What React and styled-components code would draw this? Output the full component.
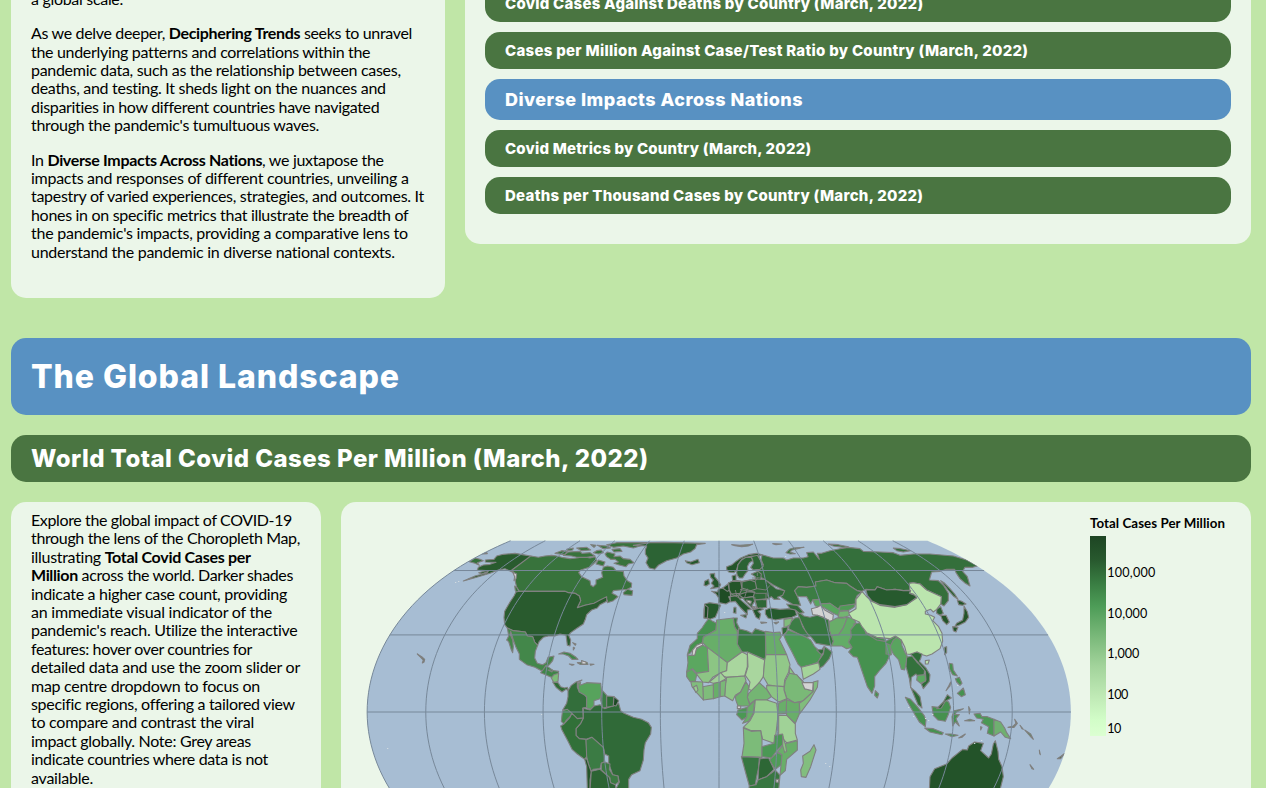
import React, { useLayoutEffect, useRef } from 'react';
import styled, { createGlobalStyle } from 'styled-components';

const Global = createGlobalStyle`
  html, body { margin: 0; background: #c0e6a7; }
  body { width: 1266px; height: 788px; overflow: hidden; }
  * { box-sizing: border-box; }
`;

const Page = styled.main`
  height: 788px;
  overflow: hidden;
  padding: 0 15px 0 11px;
  display: flex;
  flex-direction: column;
  color: #000;
  font-family: Lato, 'Liberation Sans', sans-serif;
  font-size: 16px;
  line-height: 18.4px;
`;

const IntroRow = styled.section`
  display: grid;
  grid-template-columns: 434px 786px;
  gap: 20px;
  align-items: start;
  margin-top: -50px;
  flex: none;
`;

const Card = styled.div`
  background: #ebf6e9;
  border-radius: 15px;
  display: flex;
  flex-direction: column;
  padding: ${(p) => p.$pad || '20px'};
  height: ${(p) => p.$height}px;
  justify-content: ${(p) => (p.$end ? 'flex-end' : 'flex-start')};
  overflow: hidden;
`;

const Paragraph = styled.p`
  margin: 0 0 16px;
`;

const LineBox = styled.span`
  display: block;
  white-space: pre;
`;

const Bar = styled.div`
  flex: none;
  display: flex;
  align-items: center;
  height: ${(p) => p.$height}px;
  margin: ${(p) => p.$margin || 0};
  padding: ${(p) => p.$drop || 0}px 20px 0;
  border-radius: 15px;
  background: ${(p) => (p.$blue ? '#5891c2' : '#4a7541')};
  color: #fff;
  font-family: Inter, 'Liberation Sans', sans-serif;
  font-weight: 800;
  font-size: ${(p) => p.$size}px;
  line-height: 1.2;
`;

const DetailRow = styled.section`
  display: grid;
  grid-template-columns: 310px 910px;
  gap: 20px;
  margin-top: 20px;
  flex: none;
`;

const MapSvg = styled.svg`
  display: block;
  width: 910px;
  height: 306px;
`;

const LegendText = styled.text`
  font-family: Lato, 'Liberation Sans', sans-serif;
  font-size: ${(p) => (p.$bold ? 13.3 : 12.6)}px;
  font-weight: ${(p) => (p.$bold ? 700 : 400)};
  fill: #000;
`;

/* Spreads a line of text evenly over a given measure. */
function Line({ width, children }) {
  const ref = useRef(null);
  useLayoutEffect(() => {
    const el = ref.current;
    el.style.letterSpacing = '0px';
    const natural = el.getBoundingClientRect().width;
    el.style.letterSpacing = `${(width - natural) / el.textContent.length}px`;
  }, [width]);
  return (
    <LineBox>
      <span ref={ref}>{children}</span>
    </LineBox>
  );
}

const navItems = [
  ['Covid Cases Against Deaths by Country (March, 2022)', 418],
  ['Cases per Million Against Case/Test Ratio by Country (March, 2022)', 523],
  ['Diverse Impacts Across Nations', 298, true],
  ['Covid Metrics by Country (March, 2022)', 306],
  ['Deaths per Thousand Cases by Country (March, 2022)', 418],
];

/* Equal Earth projection */
const CX = 719;
const CY = 712;
const SCALE = 130;
function project(lon, lat) {
  const [a1, a2, a3, a4] = [1.340264, -0.081106, 0.000893, 0.003796];
  const t = Math.asin((Math.sqrt(3) / 2) * Math.sin((lat * Math.PI) / 180));
  const t2 = t * t;
  const t6 = t2 * t2 * t2;
  const x =
    (2 * Math.sqrt(3) * ((lon * Math.PI) / 180) * Math.cos(t)) /
    (3 * (a1 + 3 * a2 * t2 + t6 * (7 * a3 + 9 * a4 * t2)));
  const y = t * (a1 + a2 * t2 + t6 * (a3 + a4 * t2));
  return [CX + x * SCALE, CY - y * SCALE];
}
const toPath = (pts) => 'M' + pts.map((p) => p.map((n) => n.toFixed(2)).join(',')).join('L');
const meridian = (lon) => {
  const pts = [];
  for (let lat = -60; lat <= 90; lat += 2.5) pts.push(project(lon, lat));
  return pts;
};
const sphere = toPath([...meridian(-180), ...meridian(180).reverse()]) + 'Z';
const meridians = Array.from({ length: 12 }, (_, i) => toPath(meridian(-180 + i * 30)));
const parallels = [0, 30, 60].map((lat) => toPath([project(-180, lat), project(180, lat)]));

const DARK = '#295b2e';
const CAN = '#38733c';
const MID = '#46914f';

/* Each region keeps its own origin; its shapes are at three units a pixel. */
const regions = [
  {
    at: [340, 530],
    shapes: [
      [DARK, '412,120 415,112 430,105 450,103 468,97 436,96 436,90 462,88 470,78 490,73 525,70 560,76 574,79 516,120 524,130 512,124 495,116 475,120 450,130 410,142 370,153 405,138 440,129 445,124 425,132 416,128 438,122'],
      ['#346f3b', '388,95 405,84 420,88 430,92 412,98 418,106 405,100'],
      ['#808080', '422,70 440,68 442,71 428,72'],
      ['#4a6a4a', '232,372 240,377 246,381 254,388 252,396 247,399 250,390 240,380'],
    ],
  },
  {
    at: [490, 530],
    shapes: [
      [CAN, '122,78 145,82 165,78 185,76 200,78 215,82 240,86 260,84 280,80 300,84 315,80 320,92 310,102 298,112 272,120 266,128 275,140 300,152 302,165 310,170 318,162 318,150 338,142 335,128 340,112 352,108 370,112 378,122 400,124 402,138 412,152 425,160 424,172 412,178 390,180 370,182 366,190 378,196 384,200 370,212 352,218 352,210 330,215 312,220 285,226 262,233 272,212 268,198 255,190 235,188 225,184 88,184 80,172 76,155 76,135 66,120'],
      [CAN, '400,188 412,178 428,182 426,196 402,194'],
      [CAN, '345,72 352,66 375,72 372,80 390,78 400,86 420,88 432,98 415,102 408,110 385,104 372,100 385,96 375,88 362,88 350,80'],
      [CAN, '235,66 270,64 276,70 300,68 315,78 290,82 260,82 245,78 220,76'],
      [CAN, '350,44 380,38 470,38 478,42 450,48 430,54 400,48 370,52'],
      [CAN, '195,70 215,62 232,64 224,74'],
      [CAN, '260,54 290,52 302,60 275,62'],
      [CAN, '230,58 250,54 248,60 234,62'],
      [CAN, '320,62 334,60 340,68 325,72 310,68'],
      [CAN, '322,46 350,48 362,54 340,56'],
      [CAN, '366,58 390,56 396,64 372,66'],
      [CAN, '302,44 318,46 312,52'],
      [CAN, '325,90 345,96 340,108 318,102'],
      [CAN, '74,168 80,172 88,186 84,192 76,182'],
      ['#d3d3d3', '68,126 80,132 78,146 72,152 74,140'],
      [DARK, '78,186 88,184 225,184 235,188 255,190 268,198 272,212 262,233 285,226 312,220 330,210 350,200 350,214 330,224 322,234 305,240 290,254 286,268 280,282 262,294 242,308 236,316 242,330 240,348 232,346 230,330 228,316 210,312 195,318 175,318 160,322 148,334 143,346 134,336 128,320 112,318 106,306 70,302 52,294 44,284 42,262 44,244 60,216 72,198'],
      ['#43874a', '52,294 70,302 106,306 112,318 128,320 134,336 143,346 136,364 134,384 142,400 158,404 168,398 174,382 192,378 188,392 180,402 168,412 160,424 150,420 135,412 110,404 88,388 88,372 78,352 70,330 62,304 60,312 68,330 70,350 68,368 64,360 56,335 50,330 56,318'],
      ['#2c6334', '466,60 470,48 430,46 480,38 520,37 646,40 620,44 615,56 602,66 580,72 560,84 530,92 505,106 494,118 478,114 468,98 474,84 466,72'],
      ['#5d8a5d', '248,338 258,342 256,346'],
      ['#5d8a5d', '250,352 254,354 250,360'],
    ],
  },
  {
    at: [490, 650],
    shapes: [
      ['#3f8548', '152,68 160,58 168,46 176,52 190,62 206,64 204,72 192,76 184,82 170,76'],
      ['#3f8548', '174,60 188,60 186,66'],
      ['#7dbd78', '184,84 192,74 206,70 204,94 192,98'],
      ['#2f6b36', '188,96 204,98 212,110 224,114 232,112 236,122 228,118 216,126 208,120 198,112'],
      ['#3f8548', '206,12 222,6 240,10 256,20 264,28 246,28 236,18 220,12'],
      ['#3f8548', '262,38 275,38 275,32 292,38 294,43 270,43'],
      ['#d3d3d3', '275,32 288,36 288,42 276,42'],
      ['#5d8a5d', '238,42 252,44 246,46'],
      ['#5d8a5d', '300,42 312,43 302,46'],
      ['#336e3b', '276,90 262,98 262,112 268,126 282,132 290,142 290,172 278,174 280,204 262,206 246,192 232,180 218,180 230,160 234,140 234,122 244,106 258,96'],
      ['#57a35c', '264,102 272,96 270,106 290,98 332,100 334,118 336,130 330,146 312,152 312,170 302,178 290,174 290,140 282,134 268,126'],
      ['#3f8748', '218,182 232,178 246,190 240,200 228,212 222,222 214,214 216,195'],
      ['#306a38', '280,204 280,175 300,180 312,168 330,164 344,176 356,172 370,168 386,160 392,182 402,190 430,202 455,208 475,218 484,232 482,252 466,278 462,300 460,330 450,362 425,374 416,388 416,420 376,420 388,396 384,378 368,374 356,340 356,318 344,312 340,292 306,262 288,268 268,266 258,256 258,236 272,220'],
      ['#317038', '246,190 262,206 280,204 272,220 258,236 258,256 268,266 288,268 290,300 290,320 284,328 262,312 246,298 232,270 216,240 212,228 222,222 240,202'],
      ['#3b7b44', '336,120 350,136 350,172 338,174 332,150'],
      ['#2f6b37', '350,138 372,140 370,168 350,172'],
      ['#1d4a25', '372,140 386,152 378,168 370,166'],
      ['#3b7b44', '288,270 306,262 340,292 344,312 342,336 334,340 330,356 310,358 304,364 296,345 290,320'],
      ['#3b7a42', '334,340 344,336 360,342 358,358 368,374 384,378 386,396 376,404 360,398 360,384 334,360'],
      ['#245529', '284,328 290,326 298,350 304,366 300,390 300,420 292,420 290,350'],
      ['#2c6433', '304,364 330,358 358,382 362,398 376,404 378,420 300,420'],
    ],
  },
  {
    at: [780, 530],
    shapes: [
      ['#346f3b', '-54,74 -20,84 10,84 20,90 40,84 70,84 84,80 80,68 100,66 118,88 112,70 125,70 150,62 180,56 205,52 240,56 250,64 300,66 340,68 360,76 400,72 450,72 520,78 560,90 592,108 578,112 555,112 548,124 562,140 570,168 556,160 540,146 528,128 524,118 500,118 480,124 455,126 448,150 475,152 490,166 505,190 505,212 492,228 482,222 484,200 466,192 440,180 420,162 400,158 388,160 392,180 370,182 345,178 320,180 292,170 285,180 258,178 246,184 232,182 210,168 200,160 165,158 140,150 106,156 108,168 80,172 55,170 44,182 52,198 62,226 40,224 10,206 2,200 14,182 -20,165 -60,140 -66,118 -50,104 -56,90'],
      ['#346f3b', '145,42 175,44 205,50 190,52 160,48'],
      ['#346f3b', '340,54 362,56 392,62 370,66 350,62'],
      ['#346f3b', '18,68 28,58 40,54 72,52 50,57 36,60 30,66 46,71 30,72'],
      ['#2b6233', '482,152 492,158 510,176 524,192 534,208 520,198 504,180'],
      ['#245429', '532,210 545,214 558,222 548,226 536,224'],
      ['#245429', '552,228 562,245 566,262 556,276 540,284 524,290 530,280 548,270 552,250'],
      ['#245429', '518,290 534,292 528,306 520,302'],
      ['#2b6233', '470,238 482,230 490,250 480,256 470,250'],
      ['#245429', '482,256 498,256 508,276 500,284 488,272'],
      ['#3c7d44', '44,182 55,170 80,172 108,168 106,156 140,150 165,158 200,160 210,168 232,182 246,186 232,196 226,210 226,222 190,228 172,236 150,220 120,222 118,208 98,210 92,222 80,200 62,200 52,198'],
      ['#58a55e', '98,210 118,208 120,222 150,220 176,238 186,232 190,244 178,258 160,250 130,232 106,228'],
      ['#d3d3d3', '94,236 112,232 122,226 134,240 160,254 158,272 148,274 130,262 112,256 98,254'],
      ['#4f9a55', '180,228 226,222 222,232 204,242 178,240'],
      ['#73b472', '178,244 204,242 214,256 190,262 174,262'],
      ['#69ad69', '148,276 170,264 190,264 202,262 196,280 188,296 176,314 150,318 146,296'],
      ['#63ac67', '202,262 222,266 228,280 212,300 214,320 206,336 216,352 200,356 186,348 154,348 160,334 150,318 176,314 190,294'],
      ['#377640', '50,242 72,258 90,262 112,256 146,270 148,300 160,334 154,348 130,344 108,340 94,322 78,312 70,290 60,270'],
      ['#3c7d45', '28,280 44,264 58,262 68,290 80,308 90,320 78,322 56,312 26,296'],
      ['#80bb7c', '12,268 38,264 30,284 12,294'],
      ['#2f6b37', '6,294 24,290 20,306 8,316'],
      ['#4b9854', '12,318 24,300 56,312 78,322 92,330 104,350 118,362 126,372 116,396 92,404 64,412 54,402 36,366 20,336'],
      ['#2f6b37', '110,360 126,358 132,350 130,368 124,374'],
      ['#3b7b44', '130,372 134,350 156,366 148,386 130,408 120,414 112,398'],
      [MID, '220,282 240,278 252,294 258,310 290,328 318,334 332,326 346,318 352,330 336,346 330,376 318,400 300,420 284,440 284,468 276,490 262,470 245,420 232,382 220,380 206,366 216,352 206,336 214,320 212,300 228,280'],
      ['#5aa560', '318,340 332,346 334,374 318,372'],
      [MID, '258,310 290,322 316,328 316,334 290,330'],
      [MID, '286,482 296,492 292,504 284,496'],
      ['#bbe5ae', '246,184 258,198 275,214 300,226 345,232 380,224 410,204 400,192 390,190 388,160 400,158 420,162 440,180 466,192 484,200 482,222 470,238 460,246 452,238 436,244 436,252 452,256 464,262 458,272 476,290 486,310 488,334 480,356 456,372 440,378 420,372 412,366 396,374 380,372 374,350 364,330 346,318 330,326 290,322 260,308 246,290 238,276 216,266 206,250 228,236 228,208 238,196'],
      ['#bbe5ae', '436,392 448,390 444,402 436,402'],
      [DARK, '494,352 500,350 500,368 494,374'],
      ['#275a2e', '258,180 285,180 292,170 320,180 345,178 370,182 392,182 388,190 404,196 410,202 380,224 345,230 300,224 275,212 262,196'],
    ],
  },
  {
    at: [670, 530],
    shapes: [
      ['#25582c', '46,92 62,96 84,88 88,98 66,104 50,98'],
      ['#25582c', '102,166 104,154 116,148 118,162 108,168'],
      ['#25582c', '120,132 134,130 134,140 144,152 152,164 148,172 122,176 132,168 124,160 130,150 122,142'],
      ['#5d8a5d', '185,44 210,46 248,43 235,48 215,50 195,47'],
      ['#5d8a5d', '308,41 336,42 318,44'],
      ['#245529', '170,110 186,104 198,94 212,84 235,74 260,70 276,74 262,80 245,78 230,82 215,88 204,104 200,120 192,128 176,126 170,118'],
      ['#2b6233', '200,128 204,104 215,90 228,82 244,82 248,92 238,98 232,110 234,122 224,134 218,144 208,144 202,136'],
      ['#2f6737', '244,80 262,76 272,92 280,108 270,118 250,120 242,112 250,100 248,90'],
      ['#245529', '186,138 198,134 198,152 188,152'],
      ['#2f6737', '244,132 264,124 274,132 272,148 284,148 318,176 344,182 338,196 322,202 330,208 312,208 304,200 296,206 250,210 216,204 196,210 176,198 172,168 176,158 200,152 216,154 240,150 256,148 256,140'],
      ['#1f4c25', '125,184 142,186 145,178 158,174 180,184 182,198 176,200 182,214 168,222 146,218 146,204 138,192'],
      ['#1d4a25', '158,174 174,162 178,180 172,184'],
      ['#245529', '176,158 188,154 212,154 216,176 210,190 184,192 178,180'],
      ['#2b6233', '216,156 240,150 256,156 260,176 242,182 216,174'],
      ['#1f4f27', '206,194 230,186 254,186 250,200 220,204'],
      ['#26592d', '104,222 118,218 144,222 152,226 144,244 136,262 120,268 102,264 102,240'],
      ['#1c4823', '104,224 114,232 112,264 102,264'],
      ['#25592d', '180,200 204,196 208,206 222,218 244,238 232,240 232,254 224,246 212,234 196,214 182,216'],
      ['#25592d', '212,256 230,254 228,264'],
      ['#25592d', '192,232 198,232 198,250 190,248'],
      ['#2b6233', '218,204 250,200 254,214 246,226 252,240 240,228 226,214'],
      ['#2f6737', '254,210 290,208 290,232 262,236 258,222'],
      ['#d3d3d3', '230,210 244,214 242,222 232,216'],
      ['#d3d3d3', '250,230 262,232 256,238'],
      ['#25562c', '248,240 270,234 280,238 264,244 272,252 268,268 258,262'],
      ['#2b6233', '272,276 290,278 274,280'],
      ['#2b6233', '312,278 326,276 318,282'],
      ['#255a2d', '286,240 300,234 330,238 360,236 376,240 380,256 366,262 340,266 316,270 294,264 286,252'],
      ['#2f6b37', '350,222 382,226 402,248 388,250 376,240 360,236'],
    ],
    borders: 'M246 144h24M254 156l10-14M260 176l28 4 12-14M256 190h32v20M184 192l24 12M210 178l46 10M232 176l-8 26M254 200l6 34M262 128v10M256 148l28 0M200 196l-4-16M298 210l-8-22M240 182l16 6',
  },
  {
    at: [670, 650],
    shapes: [
      [MID, '116,-94 128,-86 140,-80 138,-60 100,-38 98,-22 80,-14 68,0 60,10 52,14 60,-14 82,-34 82,-50 96,-66 108,-84'],
      ['#d3d3d3', '66,18 68,0 80,-14 98,-22 98,-14 80,-6 76,16'],
      ['#5ba760', '50,66 54,38 52,16 74,16 80,-4 98,-14 112,-8 116,64 80,70 68,56'],
      ['#68ae69', '140,-90 190,-96 194,-70 202,-56 202,-20 216,6 172,38 112,-8 98,-22 100,-38 138,-60'],
      ['#3a7a42', '190,-96 202,-96 200,-82 208,-66 202,-56 194,-70'],
      ['#3a7b43', '206,-64 230,-58 246,-50 256,-64 286,-54 288,30 232,6 216,6 202,-18'],
      ['#69ad69', '286,-56 310,-52 330,-54 334,-40 328,-32 342,-4 350,14 288,14'],
      ['#8cc584', '112,-8 172,38 170,62 152,68 128,82 116,98 98,96 78,70 116,64'],
      ['#a9d69e', '172,38 216,6 232,14 232,50 224,78 170,82 152,76 152,68 170,62'],
      ['#a9d69e', '232,6 284,30 280,80 268,98 250,124 236,118 240,96 226,76 234,50'],
      ['#92c889', '288,14 350,14 360,44 356,66 344,90 342,110 316,108 294,104 280,80 284,30'],
      ['#8cc584', '358,50 372,70 400,94 380,76 358,70'],
      ['#7ab977', '358,70 380,74 398,96 404,116 430,124 400,152 374,158 350,144 342,118 346,92'],
      ['#d3d3d3', '396,98 430,98 428,122 404,116'],
      ['#80bd7c', '430,96 444,92 442,112 420,150 390,190 388,160 402,150 430,124'],
      ['#69ae69', '348,148 374,158 388,156 388,192 376,220 350,196'],
      ['#8cc584', '290,106 316,108 342,110 342,120 350,146 326,156 304,140 290,118'],
      ['#74b573', '236,130 268,98 290,118 304,140 290,150 256,150 240,162 232,142'],
      ['#8fc787', '170,82 224,78 228,92 212,126 196,136 188,152 164,138 166,104'],
      ['#7ab977', '150,96 168,90 164,138 150,140'],
      ['#69ae69', '130,100 150,96 150,140 130,146'],
      ['#a0d097', '118,96 152,68 168,86 150,96 130,100'],
      ['#7fbc7b', '98,110 130,104 130,146 100,150'],
      ['#80bd7c', '62,94 98,96 100,150 80,128 66,110'],
      ['#98cd8f', '70,112 80,106 84,120 78,128'],
      ['#5fa963', '50,66 66,58 80,74 76,94 60,94 50,80'],
      ['#6db06d', '196,140 212,126 228,96 236,108 232,142 240,168 204,168 198,152'],
      ['#4b9854', '204,180 232,172 232,200 216,210 200,194'],
      ['#d3d3d3', '202,168 212,168 212,176 202,176'],
      ['#69ae69', '232,172 254,152 250,190 236,214 218,220 230,200'],
      ['#98cd8f', '256,150 290,150 320,160 324,196 318,250 312,280 278,268 272,242 244,242 220,232 240,212 252,190'],
      ['#69ae69', '326,160 350,148 348,190 324,192'],
      ['#a0d297', '326,196 350,196 376,222 376,250 382,270 350,278 326,254'],
      ['#7cbb79', '220,234 244,244 272,242 276,268 276,322 216,320 222,280'],
      ['#4b9854', '276,290 312,280 314,256 338,252 342,280 322,300 304,324 276,320'],
      ['#4f9c57', '304,324 322,308 336,314 334,344 316,358 298,330'],
      ['#69ae69', '342,282 382,272 382,300 350,328 346,362 330,376 336,314 322,306'],
      ['#8cc584', '338,258 346,282 350,304 344,308 338,286'],
      ['#377741', '214,320 268,322 266,352 260,380 256,404 238,408 228,372'],
      ['#2d6735', '266,352 270,326 296,324 312,358 290,380 264,390'],
      ['#377741', '236,420 238,408 258,404 264,390 290,380 316,360 330,376 326,420'],
      ['#d3d3d3', '318,388 326,388 324,398 318,396'],
      ['#82be7e', '432,284 438,300 422,350 408,382 394,380 392,360 400,340 398,318 420,304'],
      ['#a4d49a', '394,52 446,38 450,58 430,72 400,88'],
    ],
  },
  {
    at: [880, 600],
    shapes: [
      ['#59a45f', '40,120 52,112 64,122 66,138 76,160 84,172 78,190 74,210 64,208 56,180 40,162 30,140'],
      ['#34713c', '80,172 96,168 112,188 134,208 132,226 112,228 108,222 94,232 92,262 88,236 78,200'],
      ['#2e6b37', '92,162 110,156 126,162 122,176 118,184 138,204 150,224 148,244 130,266 124,252 138,240 136,214 108,180'],
      ['#5ba961', '112,226 136,224 136,244 122,250 110,240'],
      ['#2f6b37', '92,262 108,276 120,290 126,324 114,314 104,290'],
      [MID, '76,292 92,298 112,320 132,346 138,360 136,380 118,366 100,336 84,308'],
      [MID, '134,384 160,386 190,398 186,404 150,396'],
      [MID, '196,402 214,402 234,406 216,410'],
      [MID, '236,414 256,402 246,412'],
      [MID, '156,320 176,322 196,300 206,306 212,322 204,346 196,364 174,360 160,346'],
      ['#2c6434', '170,326 190,306 202,284 214,294 196,304 184,324'],
      [MID, '222,332 250,326 230,336 224,344 238,344 228,356 238,378 226,366 218,378 216,350'],
      [MID, '208,190 218,192 220,210 232,228 218,224 208,206'],
      [MID, '226,236 238,232 246,250 240,256 230,246'],
      [MID, '232,280 250,264 256,284 244,290'],
      ['#5d8a5d', '212,246 210,258 198,272 206,258'],
      ['#5d8a5d', '266,320 270,328 268,342'],
      ['#5d8a5d', '254,362 270,358 284,362 268,363'],
      ['#5d8a5d', '302,380 306,382 302,390'],
      ['#4b9855', '282,342 300,340 306,350 322,350 342,358 342,408 322,400 326,380 304,368 310,358 290,354'],
      ['#6fb070', '342,358 362,366 374,384 380,398 392,416 376,412 362,396 342,408'],
      ['#5d8a5d', '384,382 400,378 408,370 404,358 412,370 402,382'],
      ['#5d8a5d', '420,376 430,388 426,386'],
      ['#5d8a5d', '434,390 452,402 460,418 450,408'],
      ['#5d8a5d', '478,450 481,464 479,460'],
      ['#3f6c45', '450,494 461,508 456,506'],
      ['#3f6c45', '532,476 544,468 553,461 542,476'],
      ['#235329', '148,570 150,530 164,506 200,492 216,474 248,448 262,450 266,438 284,426 310,430 302,452 326,474 334,462 340,432 346,422 354,454 356,478 366,500 370,530 360,570'],
    ],
  },
];

const specks = [
  [455, 582], [458, 581], [387, 748], [541, 714], [825, 763], [829, 766], [925, 718], [928, 720],
  [974, 743], [932, 714], [957, 685], [981, 740], [913, 716], [908, 707], [785, 556], [724, 612],
];

const legendLabels = [
  ['100,000', 577.3, 48],
  ['10,000', 618, 40],
  ['1,000', 658, 32],
  ['100', 699, 21],
  ['10', 733, 14],
];

function WorldMap() {
  return (
    <MapSvg viewBox="341 502 910 306">
      <defs>
        <clipPath id="globe"><path d={sphere} /></clipPath>
        <linearGradient id="ramp" x1="0" y1="0" x2="0" y2="1">
          <stop offset="0" stopColor="#1d4523" />
          <stop offset="0.12" stopColor="#28592e" />
          <stop offset="0.23" stopColor="#387b41" />
          <stop offset="0.35" stopColor="#4d9c57" />
          <stop offset="0.5" stopColor="#79b879" />
          <stop offset="0.65" stopColor="#a2d39b" />
          <stop offset="0.8" stopColor="#bfe9b5" />
          <stop offset="0.92" stopColor="#d2fdc8" />
          <stop offset="1" stopColor="#dcffd2" />
        </linearGradient>
      </defs>
      <path d={sphere} fill="#a7bdd3" />
      <g clipPath="url(#globe)">
        {regions.map((r) => (
          <g
            key={r.at.join()}
            transform={`translate(${r.at[0]} ${r.at[1]}) scale(0.33333)`}
            stroke="#808080"
            strokeWidth="3.3"
            strokeLinejoin="round"
          >
            {r.shapes.map(([fill, points], i) => (
              <polygon key={i} fill={fill} points={points} />
            ))}
            {r.borders && <path d={r.borders} fill="none" strokeWidth="2.6" />}
          </g>
        ))}
        {specks.map(([x, y]) => (
          <rect key={`${x}-${y}`} x={x} y={y} width="1.3" height="1" fill="#d0dae0" />
        ))}
      </g>
      <g fill="none" stroke="#778899" strokeWidth="1">
        {[...meridians, ...parallels].map((d) => <path key={d} d={d} />)}
      </g>
      <LegendText $bold x="1090" y="528" textLength="135">Total Cases Per Million</LegendText>
      <rect x="1090" y="536" width="16" height="200" fill="url(#ramp)" />
      {legendLabels.map(([label, y, w]) => (
        <LegendText key={label} x="1107.3" y={y} textLength={w}>{label}</LegendText>
      ))}
    </MapSvg>
  );
}

export default function App() {
  return (
    <>
      <Global />
      <Page>
        <IntroRow>
          <Card $height={348} $end $pad="20px 20px 21px">
            <Paragraph><Line width={92}>a global scale.</Line></Paragraph>
            <Paragraph>
              <Line width={381}>As we delve deeper, <b>Deciphering Trends</b> seeks to unravel</Line>
              <Line width={339}>the underlying patterns and correlations within the</Line>
              <Line width={370}>pandemic data, such as the relationship between cases,</Line>
              <Line width={355}>deaths, and testing. It sheds light on the nuances and</Line>
              <Line width={348}>disparities in how different countries have navigated</Line>
              <Line width={288}>through the pandemic's tumultuous waves.</Line>
            </Paragraph>
            <Paragraph>
              <Line width={353}>In <b>Diverse Impacts Across Nations</b>, we juxtapose the</Line>
              <Line width={377}>impacts and responses of different countries, unveiling a</Line>
              <Line width={393}>tapestry of varied experiences, strategies, and outcomes. It</Line>
              <Line width={377}>hones in on specific metrics that illustrate the breadth of</Line>
              <Line width={377}>the pandemic's impacts, providing a comparative lens to</Line>
              <Line width={364}>understand the pandemic in diverse national contexts.</Line>
            </Paragraph>
          </Card>
          <Card $height={294} $end>
            {navItems.map(([label, width, blue]) => (
              <Bar key={label} $blue={blue} $height={blue ? 41 : 37} $size={blue ? 18 : 15} $margin="0 0 10px">
                <Line width={width}>{label}</Line>
              </Bar>
            ))}
          </Card>
        </IntroRow>
        <Bar $blue $height={77} $size={32} $margin="40px 0 0" $drop={1}><Line width={369}>The Global Landscape</Line></Bar>
        <Bar $height={47} $size={24} $margin="20px 0 0" $drop={2}><Line width={617}>World Total Covid Cases Per Million (March, 2022)</Line></Bar>
        <DetailRow>
          <Card $height={306} $pad="9px 20px">
            <Paragraph>
              <Line width={261}>Explore the global impact of COVID-19</Line>
              <Line width={269}>through the lens of the Choropleth Map,</Line>
              <Line width={220}>illustrating <b>Total Covid Cases per</b></Line>
              <Line width={262}><b>Million</b> across the world. Darker shades</Line>
              <Line width={256}>indicate a higher case count, providing</Line>
              <Line width={241}>an immediate visual indicator of the</Line>
              <Line width={267}>pandemic's reach. Utilize the interactive</Line>
              <Line width={221}>features: hover over countries for</Line>
              <Line width={269}>detailed data and use the zoom slider or</Line>
              <Line width={229}>map centre dropdown to focus on</Line>
              <Line width={263}>specific regions, offering a tailored view</Line>
              <Line width={223}>to compare and contrast the viral</Line>
              <Line width={220}>impact globally. Note: Grey areas</Line>
              <Line width={237}>indicate countries where data is not</Line>
              <Line width={62}>available.</Line>
            </Paragraph>
          </Card>
          <Card $height={306} $pad="0"><WorldMap /></Card>
        </DetailRow>
      </Page>
    </>
  );
}
